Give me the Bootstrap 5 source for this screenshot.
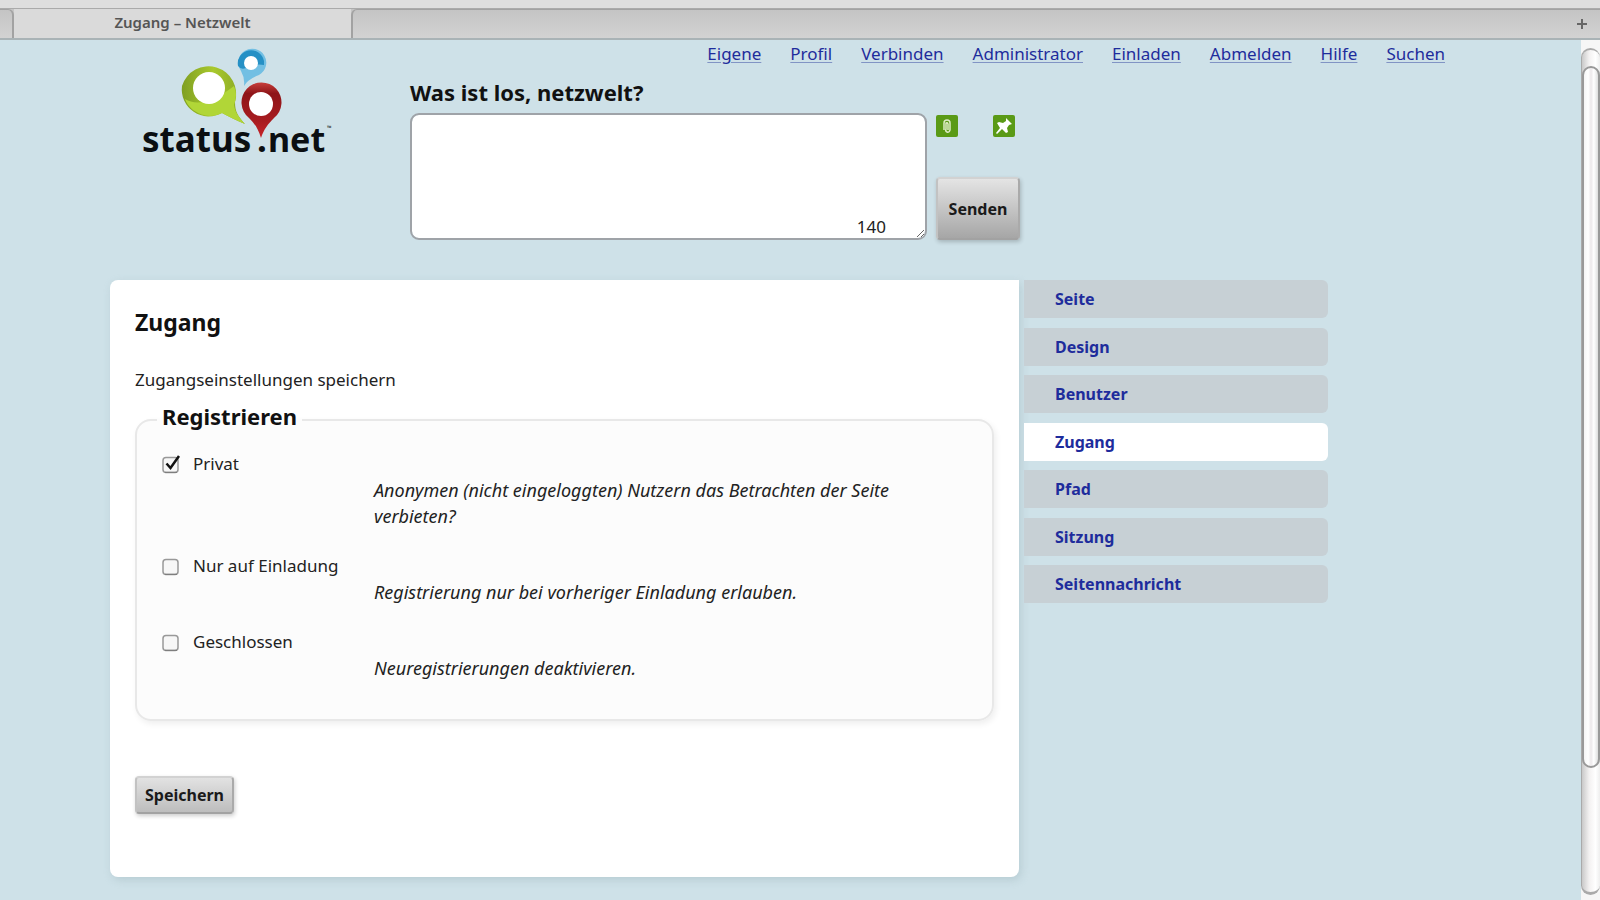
<!DOCTYPE html>
<html lang="de">
<head>
<meta charset="utf-8">
<meta name="viewport" content="width=device-width, initial-scale=1">
<title>Zugang – Netzwelt</title>
<link href="https://cdn.jsdelivr.net/npm/bootstrap@5.3.0/dist/css/bootstrap.min.css" rel="stylesheet">
<style>
  body { background: #cee1e8; color: #222; font-family: "Noto Sans", "Open Sans", sans-serif; font-size: 17px; line-height: 26px; }

  /* browser chrome */
  .toolbar-edge { height: 9px; background: #dedede; border-bottom: 1px solid #aaa; }
  .tabstrip { height: 31px; background: linear-gradient(#c4c4c4, #d2d2d2); border-bottom: 2px solid #a9b3b6; }
  .tab-prev { width: 14px; border: solid #a2a2a2; border-width: 1px 2px 0 0; border-radius: 0 6px 0 0; }
  .tab-active { width: 337px; background: #dadada; font-size: 15px; font-weight: 600; line-height: 27px; color: #555; }
  .tab-next { border: solid #a2a2a2; border-width: 1px 0 0 2px; border-radius: 6px 0 0 0; }
  .tab-add { width: 36px; color: #666; }
  .scroll-track { width: 19px; padding: 8px 0 5px; background: #f6f6f6; }
  .scroll-groove { border: 2px solid #aaa; border-width: 2px 0 3px 1px; border-radius: 10px; padding-top: 16px;
    background: linear-gradient(90deg, #c9c9c9, #f3f1f1 40%, #fff 75%, #eee); }
  .scroll-thumb { height: 85%; border: 2px solid #999; border-radius: 10px; background: linear-gradient(90deg, #f4f4f4, #fff 30%, #ece8ea 50%, #fff 70%, #ddd); }

  /* header */
  .site-nav { gap: 29px; padding: 1px 136px 0 0; }
  .site-nav a, .side-menu a { color: #1e2c9c; }
  .site-nav a { text-underline-offset: 2px; text-decoration-color: #8194c4; }
  .masthead { padding-left: 110px; }
  .brand { width: 300px; padding-left: 32px; margin-top: -19px; }
  .notice-title { font-size: 22px; font-weight: 700; line-height: 30px; padding-top: 10px; color: #111; }
  .notice { max-width: 610px; gap: 9px; margin-top: 6px; }
  .notice textarea { height: 127px; border: 2px solid #9fa3a8; border-radius: 9px; resize: both; max-width: 100%; }
  .counter { right: 41px; bottom: 0; color: #222; }
  .tools { width: 84px; }
  .tool-pair { padding: 2px 5px 0 0; }
  .tool { width: 22px; height: 22px; }
  .btn-steel { border: 2px solid; border-color: #d2d2d2 #aaa #a2a2a2 #c2c2c2; border-radius: 4px; background: linear-gradient(#e4e4e4, #a6a6a6);
    color: #1a1a1a; font-size: 16px; font-weight: 700; padding: 0; box-shadow: 1px 2px 4px #0003; }
  .btn-send { height: 63px; }
  .btn-save { width: 99px; height: 38px; background: linear-gradient(#e2e2e2, #bdbdbd); margin-top: 55px; }

  /* content */
  .content-row { padding: 40px 253px 22px 110px; gap: 5px; }
  .panel { background: #fff; border-radius: 8px 0 8px 8px; padding: 25px 25px 63px; box-shadow: 2px 3px 8px #8aa4ac55; }
  .panel h1 { font-size: 23px; font-weight: 700; line-height: 34px; color: #111; margin-bottom: 28px; }
  .settings { border: 2px solid #e8e8e8; border-radius: 16px; background: #fcfcfc; padding: 12px 25px 38px; box-shadow: 2px 3px 6px #0001; }
  .settings legend { float: none; width: auto; font-size: 22px; font-weight: 700; line-height: 30px; color: #111; margin: 0 0 0 -5px; padding: 0 5px 8px; }
  .option { display: grid; grid-template-columns: 31px 181px 1fr; margin-bottom: 24px; }
  .option input { appearance: none; width: 19px; height: 19px; margin: 4px 0 0; background: center / 19px 19px no-repeat
    url("data:image/svg+xml,%3Csvg xmlns='http://www.w3.org/2000/svg' viewBox='0 0 19 19'%3E%3Crect x='1' y='2.5' width='15' height='15' rx='3' fill='%23f7f7f7' stroke='%23999' stroke-width='1.5'/%3E%3Cpath d='M3 17.3h12' stroke='%23777'/%3E%3C/svg%3E"); }
  .option input:checked { background-image: url("data:image/svg+xml,%3Csvg xmlns='http://www.w3.org/2000/svg' viewBox='0 0 19 19'%3E%3Crect x='1' y='2.5' width='15' height='15' rx='3' fill='%23f7f7f7' stroke='%23999' stroke-width='1.5'/%3E%3Cpath d='M3 17.3h12' stroke='%23777'/%3E%3Cpath d='M4.5 8.5l4 4.500L17 1' fill='none' stroke='%23111' stroke-width='2.500'/%3E%3C/svg%3E"); }
  .option label { grid-column: 2 / 4; }
  .option p { grid-column: 3; font-size: 18px; font-style: italic; margin: 0 60px 0 0; }
  .side-menu { width: 304px; height: 323px; }
  .side-menu a { background: #c7d0d5; border-radius: 0 6px 6px 0; padding: 6px 31px; font-size: 16px; font-weight: 700; }
  .side-menu a.active { background: #fff; }
</style>
</head>
<body>
<div class="min-vh-100 d-flex flex-column">
  <div class="toolbar-edge"></div>
  <div class="tabstrip d-flex">
    <div class="tab-prev"></div>
    <div class="tab-active text-center">Zugang – Netzwelt</div>
    <div class="tab-next flex-fill d-flex justify-content-end">
      <div class="tab-add d-flex align-items-center justify-content-center">
        <svg width="12" height="12" viewBox="0 0 12 12" aria-hidden="true"><path d="M6 1v10M1 6h10" stroke="currentColor" stroke-width="2"/></svg>
      </div>
    </div>
  </div>
  <div class="d-flex flex-fill">
    <div class="flex-fill">
      <header>
        <nav class="site-nav d-flex justify-content-end" aria-label="Hauptmenü">
          <a href="#">Eigene</a><a href="#">Profil</a><a href="#">Verbinden</a><a href="#">Administrator</a><a href="#">Einladen</a><a href="#">Abmelden</a><a href="#">Hilfe</a><a href="#">Suchen</a>
        </nav>
        <div class="masthead d-flex">
          <div class="brand flex-shrink-0">
            <svg width="196" height="122" viewBox="0 0 196 122" role="img" aria-label="status.net">
              <defs>
                <linearGradient id="lime" x1="0" y1="0" x2="1" y2="0"><stop offset="0" stop-color="#7f9f22"/><stop offset=".5" stop-color="#a9c92d"/><stop offset="1" stop-color="#85a324"/></linearGradient>
                <linearGradient id="ruby" x1="0" y1="0" x2="0" y2="1"><stop offset="0" stop-color="#c8403c"/><stop offset=".2" stop-color="#8e1418"/><stop offset=".7" stop-color="#a81c20"/><stop offset="1" stop-color="#c8242a"/></linearGradient>
              </defs>
              <path d="M40 38a27 27 0 1 1 53 16C93 64 96 68 103 76C94 72 87 69 80 65A27 27 0 0 1 40 38Z" fill="url(#lime)"/>
              <path d="M43 51Q61 62 92 38Q96 47 92 57C93 64 96 68 103 76C94 72 87 69 80 65Q66 72 51 62Q45 57 43 51Z" fill="#b1d637"/>
              <circle cx="67" cy="40" r="16" fill="#fff"/>
              <path d="M99 23A14 14 0 1 1 117 27Q106 31 102 38Q103 30 99 23Z" fill="#72bfe3"/>
              <path d="M96 18A13 13 0 1 1 122 13L122 17Q113 15 104 20Q99 22 96 18Z" fill="#2590c5"/>
              <circle cx="109" cy="15" r="7" fill="#fff"/>
              <path d="M119 90C116 80 112 75 107 70A20 20 0 1 1 132 70C126 76 122 81 119 90Z" fill="url(#ruby)"/>
              <circle cx="119" cy="56" r="12" fill="#fff"/>
              <g font-family="Noto Sans, sans-serif" font-weight="700" fill="#0b0f12">
                <text x="0" y="104" font-size="35">status</text>
                <text x="115" y="104" font-size="35">.</text>
                <text x="126" y="104" font-size="34">net</text>
                <text x="185" y="82" font-size="6">™</text>
              </g>
            </svg>
          </div>
          <form class="flex-fill" onsubmit="return false">
            <label for="notice" class="notice-title d-block">Was ist los, netzwelt?</label>
            <div class="notice d-flex">
              <div class="position-relative flex-fill">
                <textarea id="notice" class="form-control"></textarea>
                <span class="counter position-absolute">140</span>
              </div>
              <div class="tools d-flex flex-column justify-content-between">
                <div class="tool-pair d-flex justify-content-between">
                  <button type="button" class="tool btn p-0 border-0 d-flex" aria-label="Datei anhängen">
                    <svg width="22" height="22" viewBox="0 0 22 22"><rect width="22" height="22" rx="2" fill="#5a9a16"/><path d="M8 15V8Q8 5 11 5T14 8V15Q13 18 11 17T10 14V8Q11 7 12 9V15" fill="none" stroke="#dcebc4" stroke-width="1.500"/></svg>
                  </button>
                  <button type="button" class="tool btn p-0 border-0 d-flex" aria-label="Ort teilen">
                    <svg width="22" height="22" viewBox="0 0 22 22"><rect width="22" height="22" rx="2" fill="#5a9a16"/><path d="M13 3L19 9L16 10L14 13L15 17L13 18L9 14L4 19L3 18L7 13L4 8L6 7L10 8L13 6Z" fill="#fff"/></svg>
                  </button>
                </div>
                <button type="submit" class="btn btn-steel btn-send">Senden</button>
              </div>
            </div>
          </form>
        </div>
      </header>

      <div class="content-row d-flex align-items-start">
        <main class="panel flex-fill">
          <h1>Zugang</h1>
          <p class="mb-2">Zugangseinstellungen speichern</p>
          <form onsubmit="return false">
            <fieldset class="settings">
              <legend>Registrieren</legend>
              <div class="option">
                <input type="checkbox" id="private" checked><label for="private">Privat</label>
                <p>Anonymen (nicht eingeloggten) Nutzern das Betrachten der Seite verbieten?</p>
              </div>
              <div class="option">
                <input type="checkbox" id="invite"><label for="invite">Nur auf Einladung</label>
                <p>Registrierung nur bei vorheriger Einladung erlauben.</p>
              </div>
              <div class="option mb-0">
                <input type="checkbox" id="closed"><label for="closed">Geschlossen</label>
                <p>Neuregistrierungen deaktivieren.</p>
              </div>
            </fieldset>
            <button type="submit" class="btn btn-steel btn-save">Speichern</button>
          </form>
        </main>
        <nav class="side-menu d-flex flex-column justify-content-between flex-shrink-0" aria-label="Einstellungen">
          <a class="text-decoration-none" href="#">Seite</a>
          <a class="text-decoration-none" href="#">Design</a>
          <a class="text-decoration-none" href="#">Benutzer</a>
          <a class="text-decoration-none active" aria-current="page" href="#">Zugang</a>
          <a class="text-decoration-none" href="#">Pfad</a>
          <a class="text-decoration-none" href="#">Sitzung</a>
          <a class="text-decoration-none" href="#">Seitennachricht</a>
        </nav>
      </div>
    </div>
    <div class="scroll-track d-flex flex-column flex-shrink-0" aria-hidden="true">
      <div class="scroll-groove flex-fill d-flex flex-column"><div class="scroll-thumb"></div></div>
    </div>
  </div>
</div>
<script src="https://cdn.jsdelivr.net/npm/bootstrap@5.3.0/dist/js/bootstrap.bundle.min.js"></script>
</body>
</html>
